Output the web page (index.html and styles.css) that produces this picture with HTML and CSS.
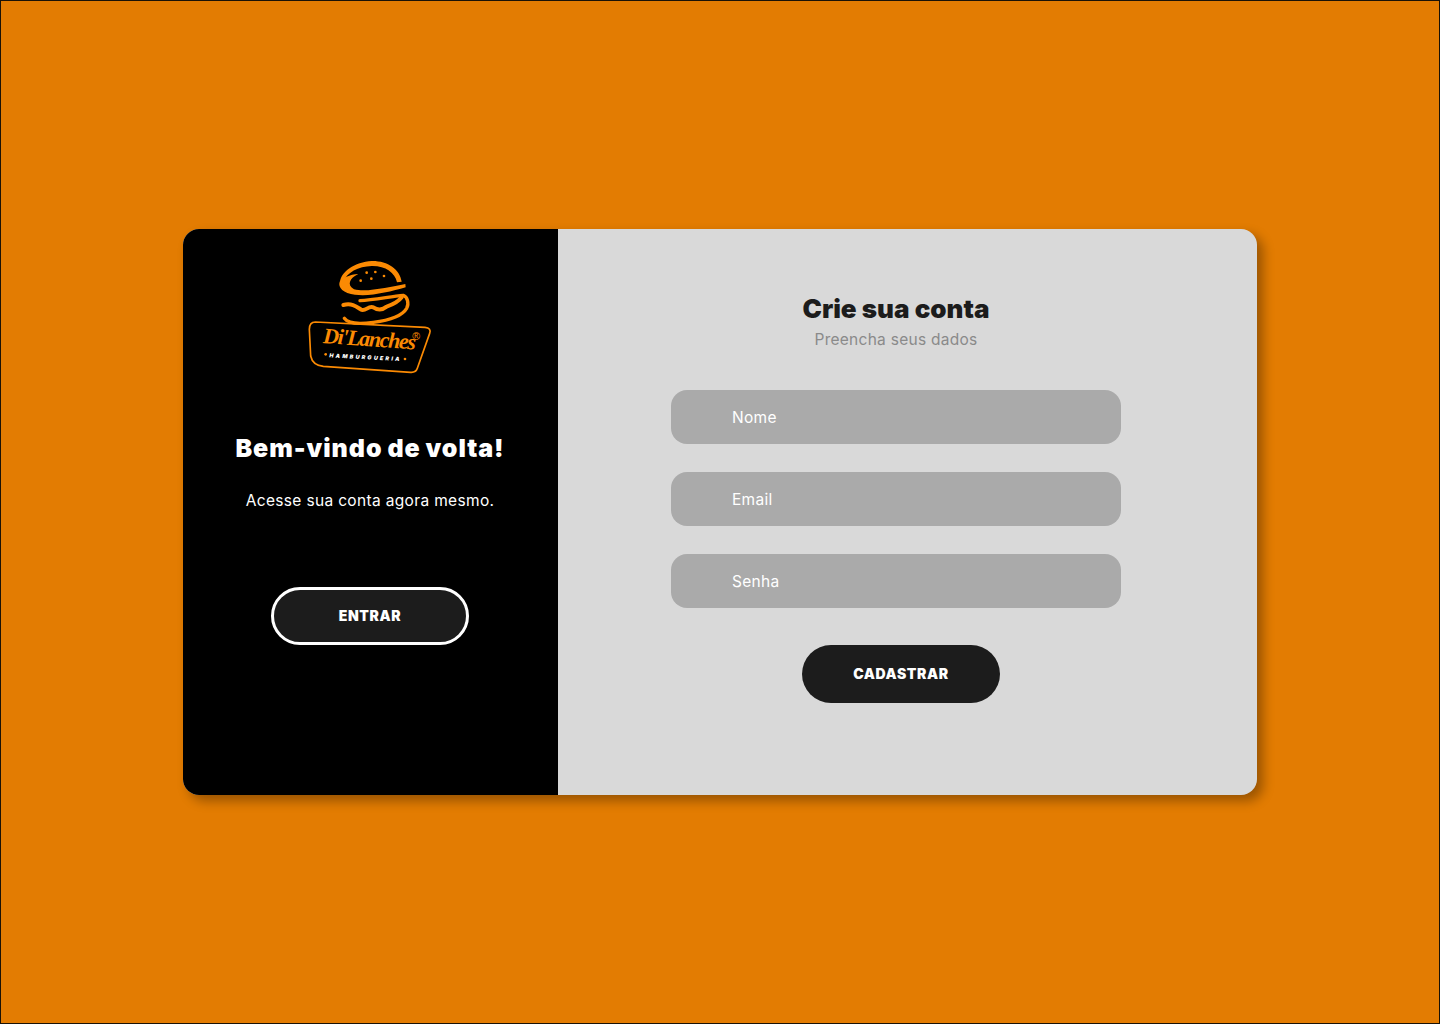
FILE: index.html
```html
<!DOCTYPE html>
<html lang="pt-BR">
<head>
<meta charset="utf-8">
<title>Di'Lanches</title>
<link rel="stylesheet" href="styles.css">
</head>
<body>
<main class="card">
  <section class="welcome">
    <svg class="logo" viewBox="0 0 480 405" width="160" height="135" aria-label="Di'Lanches Hamburgueria">
      <g class="logo-fill">
        <path d="M150 100C150 65 195 36 245 33C292 32 330 58 335 95L321 97C315 67 285 47 245 48C205 49 170 68 160 96Z"/>
        <path d="M205 72C178 85 170 105 192 118C232 128 300 110 346 102L347 112C300 126 240 140 195 134C160 130 143 112 149 95C155 85 180 73 205 72Z"/>
        <circle cx="230" cy="68" r="4"/><circle cx="256" cy="66" r="4"/><circle cx="212" cy="92" r="4"/><circle cx="244" cy="86" r="4"/><circle cx="282" cy="78" r="4"/>
        <circle cx="107" cy="313" r="4"/><circle cx="345" cy="327" r="4"/>
      </g>
      <g class="logo-line">
        <path class="patty" d="M160 165C185 158 200 170 212 178C225 188 235 165 250 172C265 182 280 178 290 170C305 165 325 155 335 142"/>
        <path d="M210 152C250 150 300 140 340 136C352 140 358 160 350 175C335 200 290 212 250 217C215 222 175 222 163 205"/>
        <path class="label" d="M76 216L405 232Q425 234 419 250L382 355Q378 368 362 367L100 349Q68 346 62 318L58 238Q58 216 76 216Z"/>
      </g>
      <text class="logo-script" x="98" y="279" transform="rotate(4 98 279)">Di'Lanches</text>
      <text class="logo-mark" x="367" y="269">®</text>
      <text class="logo-sub" x="118" y="322" transform="rotate(3 118 322)">HAMBURGUERIA</text>
    </svg>
    <h2 class="welcome-title">Bem-vindo de volta!</h2>
    <p class="welcome-text">Acesse sua conta agora mesmo.</p>
    <a class="btn btn-outline">ENTRAR</a>
  </section>
  <section class="signup">
    <h1 class="signup-title">Crie sua conta</h1>
    <p class="signup-text">Preencha seus dados</p>
    <form class="form">
      <div class="field">Nome</div>
      <div class="field">Email</div>
      <div class="field">Senha</div>
      <a class="btn btn-submit">CADASTRAR</a>
    </form>
  </section>
</main>
</body>
</html>
```
FILE: styles.css
```css
* { box-sizing: border-box; }
html, body { margin: 0; height: 100%; }
body {
  height: 1024px;
  background: #e37c02;
  border: 1px solid #1a1206;
  display: flex;
  align-items: center;
  justify-content: center;
  font-family: Inter, "Noto Sans", sans-serif;
}
.card {
  width: 1074px;
  height: 566px;
  display: flex;
  border-radius: 16px;
  overflow: hidden;
  background: #d9d9d9;
  box-shadow: 6px 6px 12px rgba(0, 0, 0, .33);
}
.welcome {
  width: 375px;
  background: #000;
  display: flex;
  flex-direction: column;
  align-items: center;
  padding: 21px 1px 0 0;
  color: #fff;
}
.logo { display: block; }
.logo-fill { fill: #fb8a03; }
.logo-line { fill: none; stroke: #fb8a03; stroke-width: 10; stroke-linecap: round; stroke-linejoin: round; }
.logo-line .patty { stroke-width: 12; }
.logo-line .label { stroke-width: 5; }
.logo-script { fill: #fb8a03; font: italic 700 66px "Liberation Serif", serif; letter-spacing: -4px; }
.logo-mark { fill: #fb8a03; font: 400 32px "Liberation Sans", sans-serif; }
.logo-sub { fill: #fff; font: italic 900 16.5px Inter, sans-serif; letter-spacing: 6.5px; }
.welcome-title {
  margin: 47px 0 0;
  font-size: 25px;
  line-height: 32px;
  font-weight: 900;
  letter-spacing: .95px;
  word-spacing: -1px;
}
.welcome-text {
  margin: 25px 0 0;
  font-size: 15.5px;
  line-height: 24px;
  font-weight: 400;
  letter-spacing: .34px;
}
.btn {
  display: flex;
  align-items: center;
  justify-content: center;
  width: 198px;
  height: 58px;
  padding-bottom: 1px;
  border-radius: 29px;
  background: #1c1c1c;
  color: #fff;
  font-size: 14px;
  font-weight: 900;
  letter-spacing: .6px;
}
.btn-outline { margin-top: 74px; border: 3px solid #fff; }
.signup {
  flex: 1;
  padding: 63px 0 0 113px;
}
.signup-title {
  width: 450px;
  margin: 0;
  text-align: center;
  font-size: 26px;
  line-height: 34px;
  font-weight: 900;
  color: #1c1c1c;
}
.signup-text {
  width: 450px;
  margin: 2px 0 0;
  text-align: center;
  font-size: 15.5px;
  line-height: 24px;
  font-weight: 400;
  letter-spacing: .27px;
  color: #8a8a8a;
}
.form {
  width: 450px;
  margin-top: 38px;
  display: flex;
  flex-direction: column;
  gap: 28px;
}
.field {
  height: 54px;
  border-radius: 16px;
  background: #aaa;
  color: #fff;
  padding-left: 61px;
  display: flex;
  align-items: center;
  font-size: 15.5px;
  font-weight: 400;
  letter-spacing: .3px;
}
.btn-submit { margin: 9px 0 0 131px; }
```
